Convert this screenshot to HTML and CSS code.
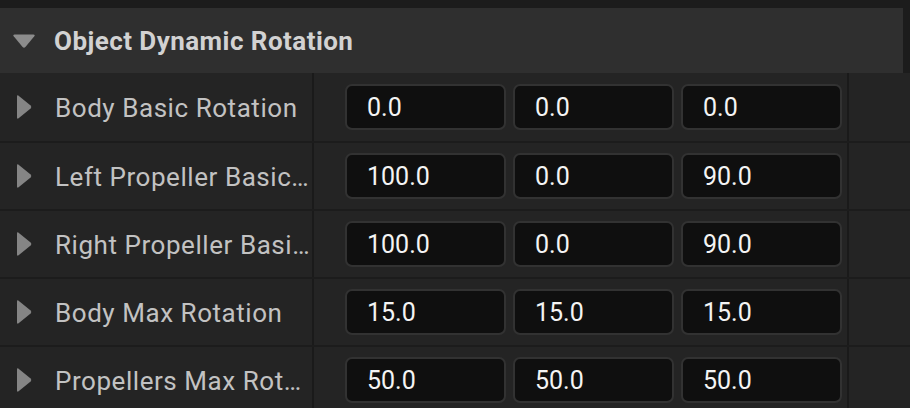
FILE: index.html
```html
<!DOCTYPE html>
<html>
<head>
<meta charset="utf-8">
<link rel="stylesheet" href="styles.css">
</head>
<body>
<div class="panel">
  <div class="header">
    <svg class="caret-down" width="24" height="16" viewBox="0 0 24 16"><path d="M2.5 1.5 H21.5 Q23.5 1.5 22.3 3.2 L13.4 14 Q12 15.6 10.6 14 L1.7 3.2 Q0.5 1.5 2.5 1.5 Z" fill="#8c8c8c"/></svg>
    <span class="title">Object Dynamic Rotation</span>
  </div>
  <div class="rows">
    <div class="row">
      <div class="label"><svg class="caret" width="16" height="26" viewBox="0 0 16 26"><path d="M1 2.5 Q1 0.6 2.6 1.8 L14.6 11.6 Q16 13 14.6 14.4 L2.6 24.2 Q1 25.4 1 23.5 Z" fill="#858585"/></svg><span class="name">Body Basic Rotation</span></div>
      <div class="values"><div class="box">0.0</div><div class="box">0.0</div><div class="box">0.0</div></div>
      <div class="extra"></div>
    </div>
    <div class="row">
      <div class="label"><svg class="caret" width="16" height="26" viewBox="0 0 16 26"><path d="M1 2.5 Q1 0.6 2.6 1.8 L14.6 11.6 Q16 13 14.6 14.4 L2.6 24.2 Q1 25.4 1 23.5 Z" fill="#858585"/></svg><span class="name">Left Propeller Basic Rotation</span></div>
      <div class="values"><div class="box">100.0</div><div class="box">0.0</div><div class="box">90.0</div></div>
      <div class="extra"></div>
    </div>
    <div class="row">
      <div class="label"><svg class="caret" width="16" height="26" viewBox="0 0 16 26"><path d="M1 2.5 Q1 0.6 2.6 1.8 L14.6 11.6 Q16 13 14.6 14.4 L2.6 24.2 Q1 25.4 1 23.5 Z" fill="#858585"/></svg><span class="name">Right Propeller Basic Rotation</span></div>
      <div class="values"><div class="box">100.0</div><div class="box">0.0</div><div class="box">90.0</div></div>
      <div class="extra"></div>
    </div>
    <div class="row">
      <div class="label"><svg class="caret" width="16" height="26" viewBox="0 0 16 26"><path d="M1 2.5 Q1 0.6 2.6 1.8 L14.6 11.6 Q16 13 14.6 14.4 L2.6 24.2 Q1 25.4 1 23.5 Z" fill="#858585"/></svg><span class="name">Body Max Rotation</span></div>
      <div class="values"><div class="box">15.0</div><div class="box">15.0</div><div class="box">15.0</div></div>
      <div class="extra"></div>
    </div>
    <div class="row">
      <div class="label"><svg class="caret" width="16" height="26" viewBox="0 0 16 26"><path d="M1 2.5 Q1 0.6 2.6 1.8 L14.6 11.6 Q16 13 14.6 14.4 L2.6 24.2 Q1 25.4 1 23.5 Z" fill="#858585"/></svg><span class="name">Propellers Max Rotation</span></div>
      <div class="values"><div class="box">50.0</div><div class="box">50.0</div><div class="box">50.0</div></div>
      <div class="extra"></div>
    </div>
  </div>
</div>
</body>
</html>
```
FILE: styles.css
```css
html, body {
  margin: 0;
  padding: 0;
  background: #1c1c1c;
  font-family: Roboto, "Liberation Sans", sans-serif;
  overflow: hidden;
}
.panel {
  padding-top: 8px;
}
.header {
  height: 65px;
  margin-right: 7px;
  background: #2f2f2f;
  display: flex;
  align-items: center;
  box-sizing: border-box;
}
.caret-down {
  margin-left: 12px;
  margin-right: 18px;
  flex: none;
}
.title {
  color: #d2d2d2;
  font-weight: bold;
  font-size: 26px;
  letter-spacing: 0.45px;
}
.row {
  display: grid;
  grid-template-columns: 312px 533px 1fr;
  column-gap: 2px;
  background: #1a1a1a;
  margin-bottom: 2px;
}
.label, .values, .extra {
  background: #242424;
  height: 66px;
}
.row:first-child .label,
.row:first-child .values,
.row:first-child .extra {
  height: 68px;
}
.label {
  display: flex;
  align-items: center;
  min-width: 0;
  padding-right: 2px;
}
.caret {
  margin-left: 16px;
  margin-right: 23px;
  flex: none;
}
.name {
  color: #c2c2c2;
  font-size: 26px;
  letter-spacing: 0.55px;
  white-space: nowrap;
  overflow: hidden;
  text-overflow: ellipsis;
  min-width: 0;
  padding-top: 2px;
}
.values {
  display: flex;
  align-items: center;
  padding-left: 31px;
  gap: 7px;
}
.box {
  width: 161px;
  height: 46px;
  box-sizing: border-box;
  background: #0f0f0f;
  border: 2px solid #323232;
  border-radius: 7px;
  color: #f4f4f4;
  font-size: 25px;
  display: flex;
  align-items: center;
  padding-left: 20px;
  padding-top: 1px;
}
```
